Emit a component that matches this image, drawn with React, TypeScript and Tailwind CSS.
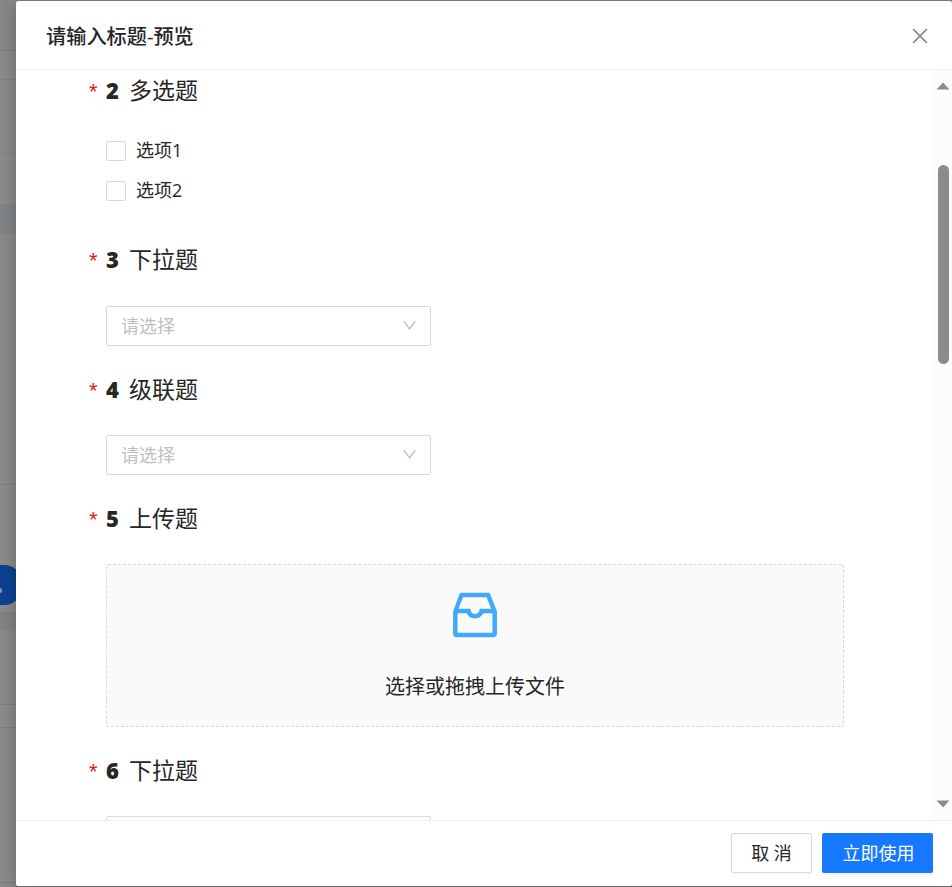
import React from 'react';
import { AiOutlineClose, AiOutlineDown, AiOutlineInbox } from 'react-icons/ai';

interface QuestionTitleProps {
  numero: number;
  title: string;
}

function QuestionTitle({ numero, title }: QuestionTitleProps) {
  return (
    <h3 className="flex h-9 items-center text-[23px] leading-[34px]">
      <span className="w-[17px] pt-px font-['Liberation_Sans'] text-[22px] leading-none text-[#e02020]">*</span>
      <span className="w-[23px] pb-0.5 text-[22px] font-extrabold">{numero}</span>
      <span className="pb-0.5">{title}</span>
    </h3>
  );
}

function SelectBox({ placeholder }: { placeholder?: string }) {
  return (
    <div className="ml-[17px] flex h-10 w-[325px] items-center justify-between rounded-xs border border-[#d9d9d9] pr-3 pl-3.5 text-[18px] text-[#bfbfbf]">
      <span>{placeholder}</span>
      <AiOutlineDown className="mb-px h-[17px] w-[17px]" />
    </div>
  );
}

function CheckOption({ label }: { label: string }) {
  return (
    <label className="flex h-10 items-center gap-2.5 text-[18px]">
      <span className="h-5 w-5 rounded-xs border border-[#d9d9d9] bg-white" />
      <span className="pb-0.5">{label}</span>
    </label>
  );
}

// Strip of the editor that stays visible behind the mask
function Backdrop() {
  return (
    <div className="w-4 shrink-0 overflow-hidden bg-[#8a8a8a]">
      <div className="h-[51px] border-b border-[#7e7e7e] bg-[#858787]" />
      <div className="h-[29px] border-b border-dashed border-[#7e7e7e]" />
      <div className="h-[74px] border-b border-dashed border-[#7e7e7e]" />
      <div className="h-[50px]" />
      <div className="h-[30px] bg-[#808385]" />
      <div className="h-[251px] border-b border-[#7e7e7e]" />
      <div className="h-20" />
      <div className="flex h-10 w-[22px] items-center rounded-r-[18px] bg-[#0d4190] pt-2.5">
        <span className="h-[5px] w-[2px] rounded-r-full bg-[#8a9ab0]" />
      </div>
      <div className="h-2 border-b border-[#7e7e7e]" />
      <div className="h-[18px] bg-[#838383]" />
      <div className="h-[74px] border-b border-[#7e7e7e]" />
      <div className="h-[23px] border-b border-[#7e7e7e]" />
      <div className="h-[155px] border-b border-[#7e7e7e]" />
    </div>
  );
}

export default function App() {
  return (
    <div className="flex h-[887px] w-[952px] overflow-hidden bg-[#7f7f7f] font-['Open_Sans','Noto_Sans_CJK_SC',sans-serif] text-[#262626]">
      <Backdrop />
      <div className="my-px flex min-w-0 flex-1 flex-col rounded-xs bg-white shadow-[0_5px_16px_rgba(0,0,0,0.25)]">
        <header className="flex h-[69px] shrink-0 items-center justify-between border-b border-[#f0f0f0] pt-0.5 pr-5 pl-[30px]">
          <h2 className="text-[20.2px] font-medium">请输入标题-预览</h2>
          <button type="button" aria-label="关闭">
            <AiOutlineClose className="h-6 w-6 p-px text-[#8c8c8c]" />
          </button>
        </header>

        <div className="flex min-h-0 flex-1">
          <div className="flex-1 overflow-hidden pt-[3px] pl-[73px]">
            <section className="h-[169px]">
              <QuestionTitle numero={2} title="多选题" />
              <div className="pt-[22px] pl-[17px]">
                <CheckOption label="选项1" />
                <CheckOption label="选项2" />
              </div>
            </section>
            <section className="flex h-[130px] flex-col gap-7">
              <QuestionTitle numero={3} title="下拉题" />
              <SelectBox placeholder="请选择" />
            </section>
            <section className="flex h-[129px] flex-col gap-[27px]">
              <QuestionTitle numero={4} title="级联题" />
              <SelectBox placeholder="请选择" />
            </section>
            <section className="flex h-[252px] flex-col gap-[27px]">
              <QuestionTitle numero={5} title="上传题" />
              <div className="ml-[17px] flex h-[163px] w-[738px] flex-col items-center rounded-xs border border-dashed border-[#d9d9d9] bg-[#fafafa] pt-5">
                <AiOutlineInbox className="h-[60px] w-[60px] text-[#40a9ff]" />
                <p className="mt-[27px] text-[20px] leading-[30px]">选择或拖拽上传文件</p>
              </div>
            </section>
            <section className="flex flex-col gap-[27px]">
              <QuestionTitle numero={6} title="下拉题" />
              <SelectBox />
            </section>
          </div>

          {/* scrollbar */}
          <div className="flex w-[18px] shrink-0 flex-col items-center bg-[#fcfcfc] pt-3 pb-3">
            <svg width="14" height="8" viewBox="0 0 14 8">
              <path d="M7 0.5L13.5 7.5H0.5Z" fill="#8b8b8b" />
            </svg>
            <div className="mt-[75px] ml-px h-[199px] w-[11px] rounded-full bg-[#8b8b8b]" />
            <svg width="14" height="8" viewBox="0 0 14 8" className="mt-auto">
              <path d="M7 7.5L13.5 0.5H0.5Z" fill="#8b8b8b" />
            </svg>
          </div>
        </div>

        <footer className="flex h-[66px] shrink-0 items-start justify-end gap-2.5 border-t border-[#f0f0f0] pt-3 pr-[19px]">
          <button type="button" className="h-10 w-[81px] rounded-xs border border-[#d9d9d9] text-[18px] shadow-[0_2px_0_rgba(0,0,0,0.02)]">
            取 消
          </button>
          <button type="button" className="h-10 w-[111px] rounded-xs bg-[#1677ff] pl-0.5 text-[18px] text-white shadow-[0_2px_0_rgba(0,0,0,0.04)]">
            立即使用
          </button>
        </footer>
      </div>
    </div>
  );
}
